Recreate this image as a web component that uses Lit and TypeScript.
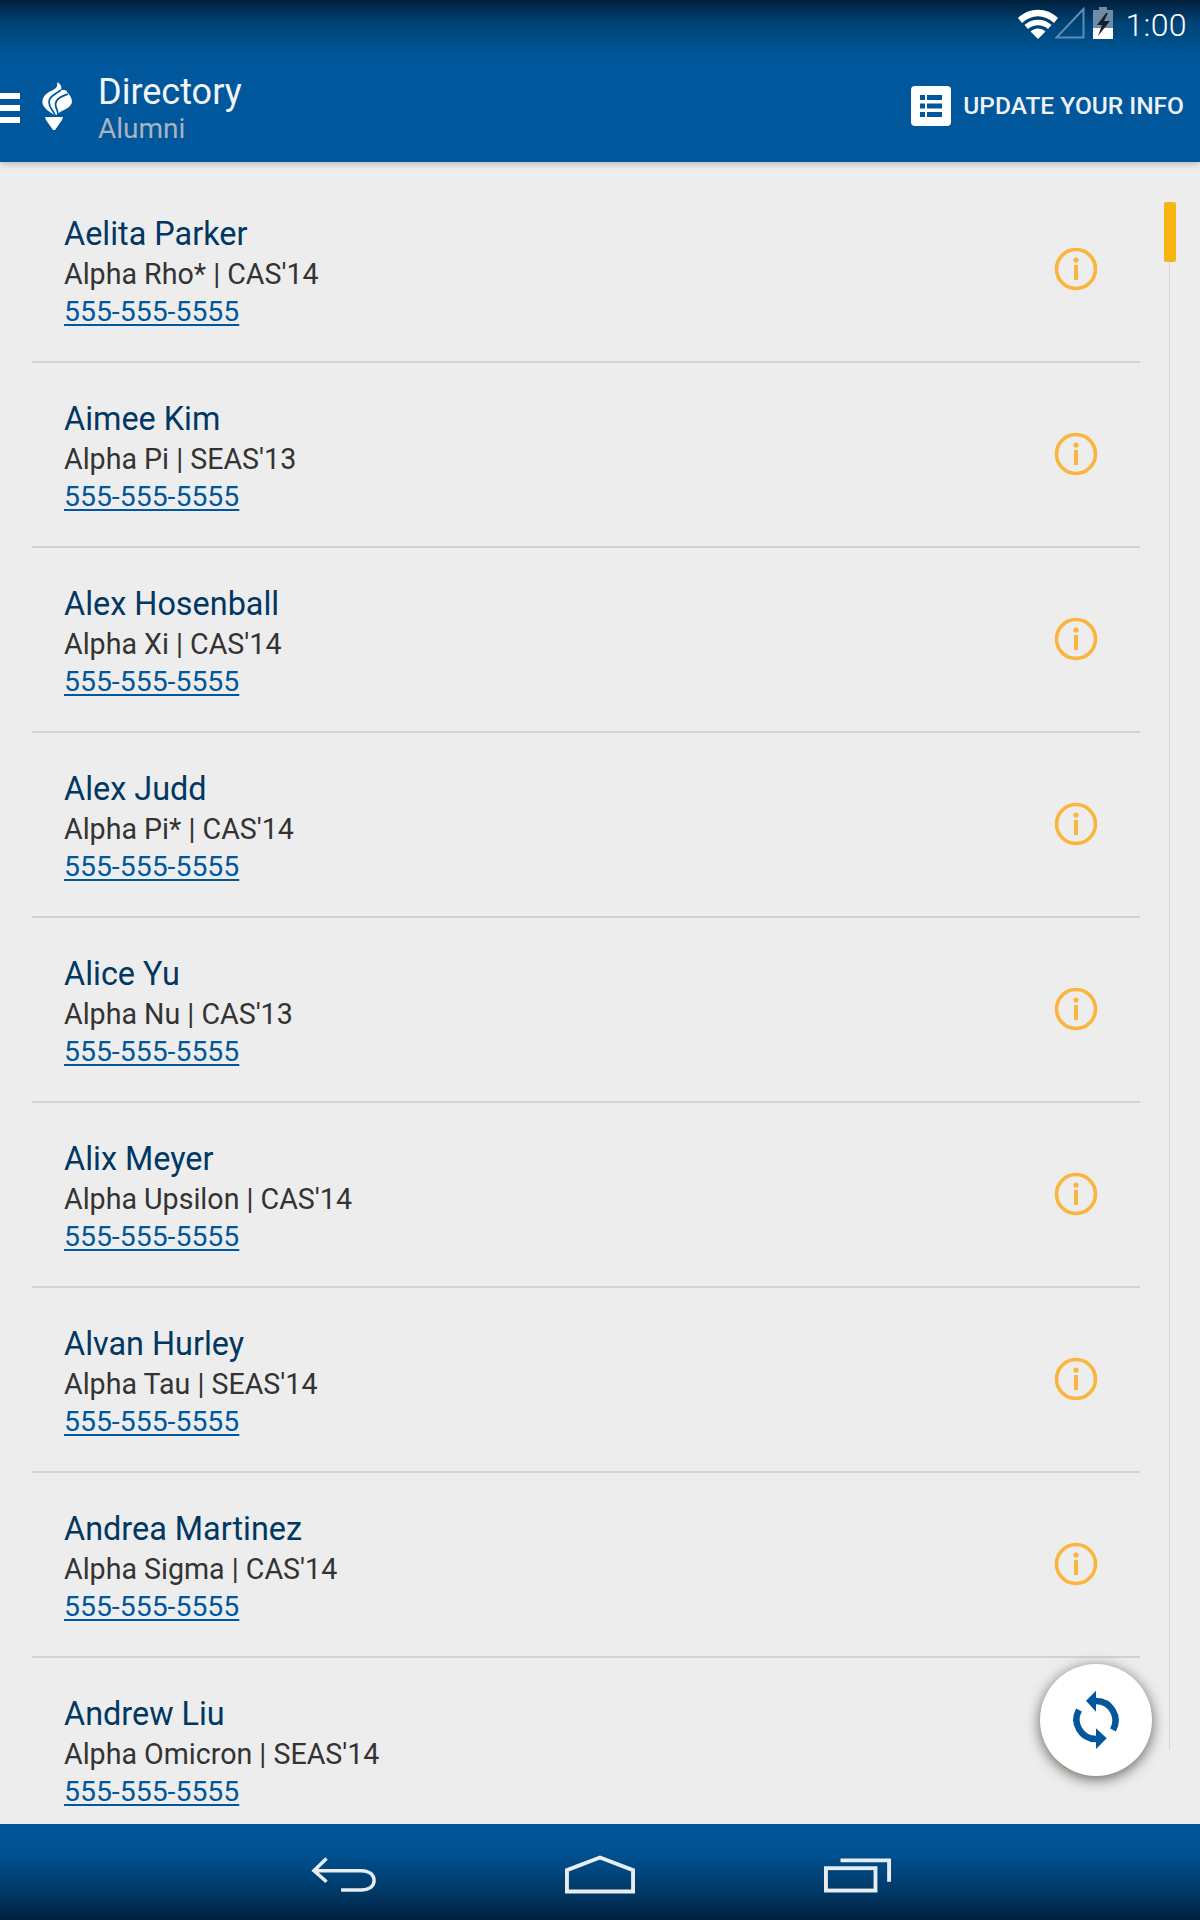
import { LitElement, html, css } from "lit";
import { customElement } from "lit/decorators.js";

const people = [
  ["Aelita Parker", "Alpha Rho* | CAS'14"],
  ["Aimee Kim", "Alpha Pi | SEAS'13"],
  ["Alex Hosenball", "Alpha Xi | CAS'14"],
  ["Alex Judd", "Alpha Pi* | CAS'14"],
  ["Alice Yu", "Alpha Nu | CAS'13"],
  ["Alix Meyer", "Alpha Upsilon | CAS'14"],
  ["Alvan Hurley", "Alpha Tau | SEAS'14"],
  ["Andrea Martinez", "Alpha Sigma | CAS'14"],
  ["Andrew Liu", "Alpha Omicron | SEAS'14"],
];

@customElement("app-root")
export class AppRoot extends LitElement {
  static styles = css`
    :host { display: block; width: 1200px; height: 1920px; font-family: Roboto, "Liberation Sans", sans-serif; background: #ededed; }
    .page { position: relative; height: 1920px; display: flex; flex-direction: column; overflow: hidden; }
    header { position: relative; z-index: 2; height: 162px; flex: none; display: flex; flex-direction: column; color: #fff;
      background: linear-gradient(#001f3b 0, #004477 24px, #00579c 58px, #00579c 100%); box-shadow: 0 2px 6px rgba(0,0,0,.22); }
    .status { height: 48px; box-sizing: border-box; flex: none; display: flex; justify-content: flex-end; align-items: flex-start; padding: 7px 13px 0 0; }
    .status svg { display: block; flex: none; }
    .wifi { margin-top: 2px; }
    .signal { margin-left: -3px; }
    .battery { margin-left: 7px; }
    .time { font-size: 32px; line-height: 36px; margin-left: 11px; letter-spacing: .4px; font-weight: 300; color: #fff; }
    .toolbar { flex: 1; display: flex; align-items: flex-start; }
    .menu { width: 20px; flex: none; margin-top: 45px; display: flex; flex-direction: column; gap: 6px; }
    .menu i { display: block; height: 6px; background: #fff; }
    .torch { margin: 34px 0 0 22px; flex: none; display: block; }
    .titles { margin: 23px 0 0 26px; }
    .title { font-size: 36px; line-height: 42px; color: #f2f5f8; font-weight: 400; }
    .subtitle { font-size: 28px; line-height: 32px; color: #a9b4bf; }
    .update { margin: 38px 16px 0 auto; display: flex; align-items: center; gap: 12px; font-size: 24.5px; font-weight: 500; line-height: 40px; color: #eef1f4; }
    .update svg { display: block; }
    .list { flex: 1; min-height: 0; overflow: hidden; padding-left: 32px; padding-top: 16px; width: 1108px; box-sizing: content-box; }
    .row { height: 183px; border-bottom: 2px solid #d2d2d2; padding-left: 32px; padding-right: 42px; display: flex; align-items: center; justify-content: space-between; box-sizing: content-box; }
    .info { flex: none; display: block; margin-top: -2px; }
    .text { display: flex; flex-direction: column; margin-top: 4px; }
    .name { font-size: 32.4px; line-height: 42px; color: #003763; }
    .sub { font-size: 28.6px; line-height: 38px; color: #333333; }
    .phone { font-size: 28.4px; line-height: 38px; color: #00579c; text-decoration: underline; text-underline-offset: 3px; text-decoration-thickness: 2px; }
    nav { height: 96px; flex: none; display: grid; grid-template-columns: repeat(3, 258px); justify-content: center; align-items: center;
      background: linear-gradient(#00579c 0, #00508f 30px, #003a69 66px, #001f3d 100%); }
    nav svg { display: block; margin: 6px auto 0; }
    .back { transform: translateX(2px); }
    .track { position: absolute; left: 1169px; top: 262px; width: 1px; height: 1488px; background: #d6d6d6; }
    .thumb { position: absolute; left: 1164px; top: 202px; width: 12px; height: 60px; border-radius: 2px; background: #f7b512; }
    .fab { position: absolute; left: 1040px; top: 1664px; width: 112px; height: 112px; border-radius: 50%; background: #fff;
      box-shadow: 0 3px 14px rgba(0,0,0,.6); display: flex; align-items: center; justify-content: center; z-index: 1; }
    .fab svg { display: block; }
  `;

  render() {
    return html`<div class="page">
      <header>
        <div class="status">
          <svg class="wifi" width="40" height="30" viewBox="0 0 40 30">
            <path d="M0 9 C11 -2 29 -2 40 9 L36 14 C26 5 14 5 4 14 Z" fill="#fff"/>
            <path d="M6.5 16 C14 9 26 9 33.5 16 L30 20 C24 15 16 15 10 20 Z" fill="#fff"/>
            <path d="M12.5 22.5 C17 18.5 23 18.5 27.5 22.5 L20 30 Z" fill="#fff"/>
          </svg>
          <svg class="signal" width="30" height="32" viewBox="0 0 30 32">
            <path d="M1.5 30.5 L28.5 2 V30.5 Z" fill="none" stroke="#5f8cb4" stroke-width="2"/>
          </svg>
          <svg class="battery" width="22" height="32" viewBox="0 0 22 32">
            <path d="M7 0 H15 V3 H21 V32 H1 V3 H7 Z" fill="#6f8ba6"/>
            <rect x="1" y="21" width="20" height="11" fill="#fff"/>
            <path d="M14 6 L5 18 H10 L6 29 L18 14 H12 L16 6 Z" fill="#15202b"/>
          </svg>
          <span class="time">1:00</span>
        </div>
        <div class="toolbar">
          <div class="menu"><i></i><i></i><i></i></div>
          <svg class="torch" width="30" height="48" viewBox="0 0 30 48">
            <path d="M15 0 C19 2 20 5 19 8 C22 8 25 8 25 10 C28 13 30 16 30 20 C29 25 24 27 20 29 C17 30 16 32 15 33 H12 C8 30 3 27 1 23 C-1 18 2 13 7 10 C11 8 17 6 15 0 Z" fill="#fff"/>
            <path d="M19 8 C14 12 7 14 7 20 C7 26 11 28 13 33" fill="none" stroke="#00579c" stroke-width="1.7"/>
            <path d="M26 12 C21 14 14 16 13.5 22 C13.5 27 17 29 15.5 33" fill="none" stroke="#00579c" stroke-width="1.7"/>
            <path d="M3 35 H21 L20 38 L13 48 H11 L4 38 Z" fill="#fff"/>
          </svg>
          <div class="titles">
            <div class="title">Directory</div>
            <div class="subtitle">Alumni</div>
          </div>
          <div class="update">
            <svg width="40" height="40" viewBox="0 0 40 40">
              <rect width="40" height="40" rx="4" fill="#fff"/>
              <path d="M9 9 H14 V14 H9 Z M16 9 H31 V14 H16 Z M9 17.5 H14 V22.5 H9 Z M16 17.5 H31 V22.5 H16 Z M9 26 H14 V31 H9 Z M16 26 H31 V31 H16 Z" fill="#00579c"/>
            </svg>
            <span>UPDATE YOUR INFO</span>
          </div>
        </div>
      </header>
      <div class="list">
        ${people.map(([n, s]) => html`<div class="row">
          <div class="text">
            <span class="name">${n}</span>
            <span class="sub">${s}</span>
            <span class="phone">555-555-5555</span>
          </div>
          <svg class="info" width="44" height="44" viewBox="0 0 44 44">
            <circle cx="22" cy="22" r="19.5" fill="none" stroke="#fbb43c" stroke-width="3.6"/>
            <circle cx="22" cy="13" r="2.6" fill="#fbb43c"/>
            <rect x="20" y="18" width="4" height="15" fill="#fbb43c"/>
          </svg>
        </div>`)}
      </div>
      <nav>
        <svg class="back" width="66" height="38" viewBox="0 0 68 38">
          <path d="M16 2 L3 14.5 L16 26 M3 14.5 H52 C59 14.5 65 18 65 25 C65 31 59 34.5 52 34.5 H31" fill="none" stroke="#e8edf2" stroke-width="3.6"/>
        </svg>
        <svg width="70" height="40" viewBox="0 0 72 40">
          <path d="M2 15 L36 2 L70 15 V37 H2 Z" fill="none" stroke="#e8edf2" stroke-width="4"/>
        </svg>
        <svg width="68" height="36" viewBox="0 0 70 36">
          <rect x="2" y="11" width="51" height="23" fill="none" stroke="#e8edf2" stroke-width="4"/>
          <path d="M17 3 H67 V25" fill="none" stroke="#e8edf2" stroke-width="4"/>
        </svg>
      </nav>
      <div class="track"></div>
      <div class="thumb"></div>
      <div class="fab">
        <svg width="64" height="64" viewBox="-32 -32 64 64">
          <path d="M0 -19 A19.5 19.5 0 0 1 17 10" fill="none" stroke="#00579c" stroke-width="6.5"/>
          <path d="M-10 -19.3 L0 -29.3 V-8.3 Z" fill="#00579c"/>
          <path d="M-17 -10 A19.5 19.5 0 0 0 0 19" fill="none" stroke="#00579c" stroke-width="6.5"/>
          <path d="M0 8.3 L10.7 18.3 L0 29 Z" fill="#00579c"/>
        </svg>
      </div>
    </div>`;
  }
}
